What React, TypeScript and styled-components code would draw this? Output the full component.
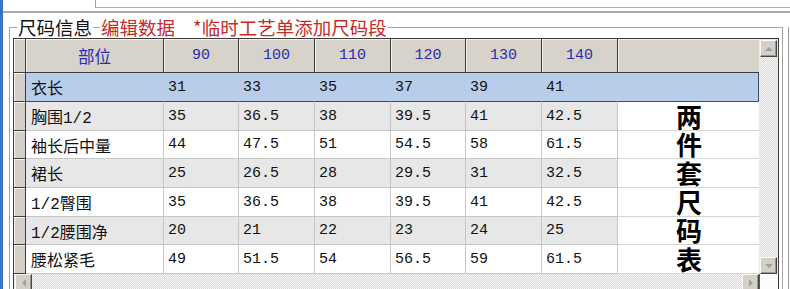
import React from "react";
import styled, { createGlobalStyle } from "styled-components";

type Tone = "selected" | "shade" | "plain";

const sizes = ["90", "100", "110", "120", "130", "140"];

const rows = [
  { part: "衣长", values: ["31", "33", "35", "37", "39", "41"] },
  { part: "胸围1/2", values: ["35", "36.5", "38", "39.5", "41", "42.5"] },
  { part: "袖长后中量", values: ["44", "47.5", "51", "54.5", "58", "61.5"] },
  { part: "裙长", values: ["25", "26.5", "28", "29.5", "31", "32.5"] },
  { part: "1/2臀围", values: ["35", "36.5", "38", "39.5", "41", "42.5"] },
  { part: "1/2腰围净", values: ["20", "21", "22", "23", "24", "25"] },
  { part: "腰松紧毛", values: ["49", "51.5", "54", "56.5", "59", "61.5"] },
];

const toneOf = (i: number): Tone => (i === 0 ? "selected" : i % 2 ? "shade" : "plain");

const GlobalStyle = createGlobalStyle`
  html, body {
    margin: 0;
    padding: 0;
    background: #fff;
  }
  body {
    width: 790px;
    height: 289px;
    overflow: hidden;
    font-family: "Noto Sans CJK SC", sans-serif;
  }
`;

const Window = styled.div`
  width: 790px;
  height: 289px;
  box-sizing: border-box;
  border-left: 3px solid #3b72c4;
  background: #fff;
  display: flex;
  flex-direction: column;
  overflow: hidden;
`;

const TopStrip = styled.div`
  height: 11px;
  flex-shrink: 0;
  display: flex;
  border-bottom: 2px solid #ababab;
`;

const InputEdge = styled.div`
  margin-left: 92px;
  flex: 1;
  height: 7px;
  border-left: 1px solid #9aa6a6;
  border-bottom: 1px solid #86c3c0;
`;

const Main = styled.div`
  display: flex;
  flex: 1;
  min-height: 0;
  padding-top: 5px;
`;

const GroupBox = styled.section`
  flex: 1;
  min-width: 0;
  margin-left: 6px;
  display: flex;
  flex-direction: column;
`;

const SidePanel = styled.div`
  width: 0;
  margin: 9px 1px 0 5px;
  border-left: 1px solid #9a9a9a;
`;

const Caption = styled.div`
  height: 18px;
  flex-shrink: 0;
  display: flex;
  align-items: stretch;
  font-family: "Noto Sans CJK SC", sans-serif;
  font-size: 18.5px;
  line-height: 18px;
  white-space: nowrap;
`;

const Rule = styled.span<{ $width?: number; $edge?: "left" | "right" }>`
  align-self: flex-end;
  height: 9px;
  box-sizing: border-box;
  border-top: 1px solid #a3a3a3;
  ${(p) => (p.$width ? `width: ${p.$width}px;` : "flex: 1;")}
  ${(p) => (p.$edge === "left" ? "border-left: 1px solid #a3a3a3;" : "")}
  ${(p) => (p.$edge === "right" ? "border-right: 1px solid #a3a3a3;" : "")}
`;

const CaptionText = styled.span<{ $red?: boolean; $gap?: number }>`
  padding: 0 1px;
  margin-left: ${(p) => p.$gap || 0}px;
  color: ${(p) => (p.$red ? "#c42b2b" : "#111")};
`;

const GroupBody = styled.div`
  flex: 1;
  min-height: 0;
  overflow: hidden;
  border-left: 1px solid #a3a3a3;
  border-right: 1px solid #a3a3a3;
  padding: 2px 3px 0 3px;
`;

const Grid = styled.div`
  display: grid;
  grid-template-columns: 12px 138px 75px 76px 76px 75px 76px 76px 141px 19px;
  grid-template-rows: 34px 29px 29px 28px 29px 29px 28px 29px 17px;
  border: 1px solid #3c3c3c;
  background: #fff;
  font-family: "Liberation Mono", "Noto Sans CJK SC", monospace;
  color: #111;
`;

const HeaderCell = styled.div<{ $blank?: boolean }>`
  box-sizing: border-box;
  display: flex;
  align-items: center;
  justify-content: center;
  background: #d7d3cb;
  border-right: ${(p) => (p.$blank ? "none" : "1px solid #3c3c3c")};
  border-bottom: 1px solid #3c3c3c;
  box-shadow: inset 1px 1px 0 #f3f1ec;
  color: #2b2bb0;
  font-size: 15px;
`;

const HeaderWide = styled.span`
  font-family: "Noto Sans CJK SC", sans-serif;
  font-size: 16.5px;
`;

const Indicator = styled.div`
  box-sizing: border-box;
  background: #d4d0c8;
  border-right: 1px solid #3c3c3c;
  border-bottom: 1px solid #3c3c3c;
  box-shadow: inset 1px 1px 0 #f6f5f2;
`;

const backgrounds: Record<Tone, string> = {
  selected: "#b8cdea",
  shade: "#e7e7e7",
  plain: "#ffffff",
};

const Cell = styled.div<{ $tone: Tone; $part?: boolean }>`
  box-sizing: border-box;
  display: flex;
  align-items: center;
  padding-left: ${(p) => (p.$part ? 5 : 4)}px;
  font-size: ${(p) => (p.$part ? 16 : 15)}px;
  white-space: nowrap;
  overflow: hidden;
  background: ${(p) => backgrounds[p.$tone]};
  border-right: 1px solid ${(p) => (p.$tone === "selected" ? backgrounds.selected : "#c6c6c6")};
  border-bottom: 1px solid ${(p) => (p.$tone === "selected" ? "#404a63" : "#c6c6c6")};
`;

const ExtraCell = styled.div<{ $row: number; $selected?: boolean }>`
  grid-column: 9;
  grid-row: ${(p) => p.$row};
  box-sizing: border-box;
  background: ${(p) => (p.$selected ? backgrounds.selected : "#fff")};
  border-bottom: 1px solid ${(p) => (p.$selected ? "#404a63" : "#d4d4d4")};
  border-right: ${(p) => (p.$selected ? "1px solid #404a63" : "none")};
`;

const Annotation = styled.div`
  grid-column: 9;
  grid-row: 3 / 9;
  z-index: 1;
  display: flex;
  align-items: center;
  justify-content: center;
  overflow: visible;
  pointer-events: none;
`;

const AnnotationText = styled.span`
  writing-mode: vertical-rl;
  white-space: nowrap;
  flex-shrink: 0;
  font-family: "Noto Sans CJK SC", sans-serif;
  font-weight: 700;
  font-size: 26px;
  line-height: 26px;
  letter-spacing: 2.6px;
  padding-top: 3px;
  color: #000;
`;

const dither = `
  background-color: #ececec;
  background-image: repeating-conic-gradient(#d9d9d9 0% 25%, #f7f7f7 0% 50%);
  background-size: 2px 2px;
`;

const VScroll = styled.div`
  grid-column: 10;
  grid-row: 1 / 9;
  display: flex;
  flex-direction: column;
  justify-content: space-between;
  padding: 1px 1px 0 1px;
  ${dither}
`;

const HScroll = styled.div`
  grid-column: 1 / 10;
  grid-row: 9;
  display: flex;
  justify-content: space-between;
  padding: 0 0 0 1px;
  ${dither}
`;

const Corner = styled.div`
  grid-column: 10;
  grid-row: 9;
  background: #fbfbfb;
  border-left: 1px solid #5a5a5a;
`;

const ScrollButton = styled.div`
  width: 17px;
  height: 17px;
  flex-shrink: 0;
  box-sizing: border-box;
  display: flex;
  align-items: center;
  justify-content: center;
  background: #d4d0c8;
  border: 1px solid;
  border-color: #fbfbfb #454545 #454545 #fbfbfb;
  box-shadow: inset -1px -1px 0 #9a968f;
`;

const arrows = {
  up: "0,5 4,1 8,5",
  down: "0,1 4,5 8,1",
  left: "5,0 1,4 5,8",
  right: "1,0 5,4 1,8",
};

function Arrow({ dir }: { dir: keyof typeof arrows }) {
  const wide = dir === "up" || dir === "down";
  return (
    <svg width={wide ? 8 : 6} height={wide ? 6 : 8} viewBox={wide ? "0 0 8 6" : "0 0 6 8"}>
      <polygon points={arrows[dir]} fill="#a4a19b" />
    </svg>
  );
}

export default function App() {
  return (
    <>
      <GlobalStyle />
      <Window>
        <TopStrip>
          <InputEdge />
        </TopStrip>
        <Main>
          <GroupBox>
            <Caption>
              <Rule $width={8} $edge="left" />
              <CaptionText>尺码信息</CaptionText>
              <Rule $width={7} />
              <CaptionText $red>编辑数据</CaptionText>
              <CaptionText $red $gap={16}>*临时工艺单添加尺码段</CaptionText>
              <Rule $edge="right" />
            </Caption>
            <GroupBody>
              <Grid>
                <Indicator />
                <HeaderCell>
                  <HeaderWide>部位</HeaderWide>
                </HeaderCell>
                {sizes.map((s) => (
                  <HeaderCell key={s}>{s}</HeaderCell>
                ))}
                <HeaderCell $blank />
                <VScroll>
                  <ScrollButton>
                    <Arrow dir="up" />
                  </ScrollButton>
                  <ScrollButton>
                    <Arrow dir="down" />
                  </ScrollButton>
                </VScroll>

                {rows.map((row, i) => {
                  const tone = toneOf(i);
                  return (
                    <React.Fragment key={row.part + i}>
                      <Indicator />
                      <Cell $tone={tone} $part>
                        {row.part}
                      </Cell>
                      {row.values.map((v, j) => (
                        <Cell key={j} $tone={tone}>
                          {v}
                        </Cell>
                      ))}
                      <ExtraCell $row={i + 2} $selected={tone === "selected"} />
                    </React.Fragment>
                  );
                })}

                <Annotation>
                  <AnnotationText>两件套尺码表</AnnotationText>
                </Annotation>

                <HScroll>
                  <ScrollButton>
                    <Arrow dir="left" />
                  </ScrollButton>
                  <ScrollButton>
                    <Arrow dir="right" />
                  </ScrollButton>
                </HScroll>
                <Corner />
              </Grid>
            </GroupBody>
          </GroupBox>
          <SidePanel />
        </Main>
      </Window>
    </>
  );
}
